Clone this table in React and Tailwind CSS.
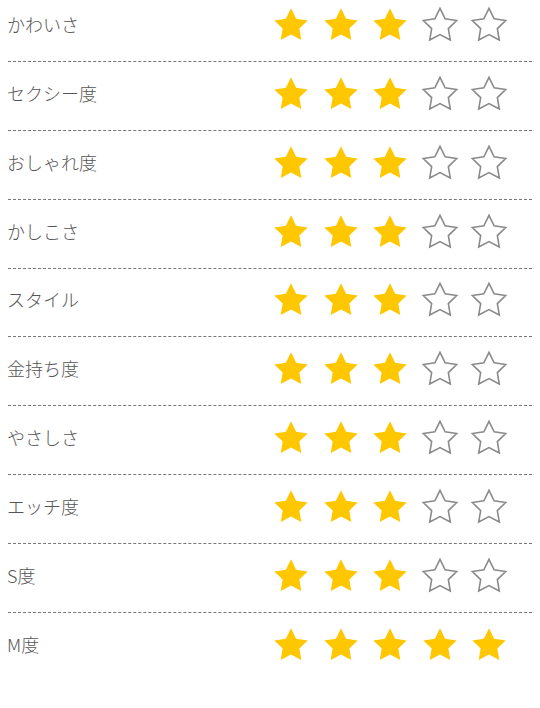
import React from "react";

const rows = [
  ["かわいさ", 3],
  ["セクシー度", 3],
  ["おしゃれ度", 3],
  ["かしこさ", 3],
  ["スタイル", 3],
  ["金持ち度", 3],
  ["やさしさ", 3],
  ["エッチ度", 3],
  ["S度", 3],
  ["M度", 5],
];

const STAR =
  "M12 2l3.09 6.26L22 9.27l-5 4.87 1.18 6.88L12 17.77l-6.18 3.25L7 14.14 2 9.27l6.91-1.01L12 2z";

function Star({ filled }) {
  return (
    <svg viewBox="0 0 24 24" className="w-[40px] h-[40px] shrink-0">
      {filled ? (
        <path d={STAR} fill="#ffc700" />
      ) : (
        <path
          d={STAR}
          fill="none"
          stroke="#8a8a8a"
          strokeWidth="0.95"
          strokeLinejoin="miter"
        />
      )}
    </svg>
  );
}

export default function App() {
  return (
    <div className="w-[540px] h-[708px] bg-white overflow-hidden px-2 font-['Noto_Sans_CJK_JP','Noto_Sans',sans-serif]">
      <div className="-mt-[8px]">
        {rows.map(([label, n], i) => (
          <div
            key={i}
            className={
              "flex items-center h-[68.875px] pb-[4px] " +
              (i === 0 ? "border-t border-transparent" : "border-t border-dashed border-[#777]")
            }
          >
            <div className="w-[264px] shrink-0 -ml-[1px] -mt-[2px] text-[18px] leading-none font-light text-[#555]">
              {label}
            </div>
            <div className="flex gap-[9.5px]">
              {[0, 1, 2, 3, 4].map((k) => (
                <Star key={k} filled={k < n} />
              ))}
            </div>
          </div>
        ))}
      </div>
    </div>
  );
}
